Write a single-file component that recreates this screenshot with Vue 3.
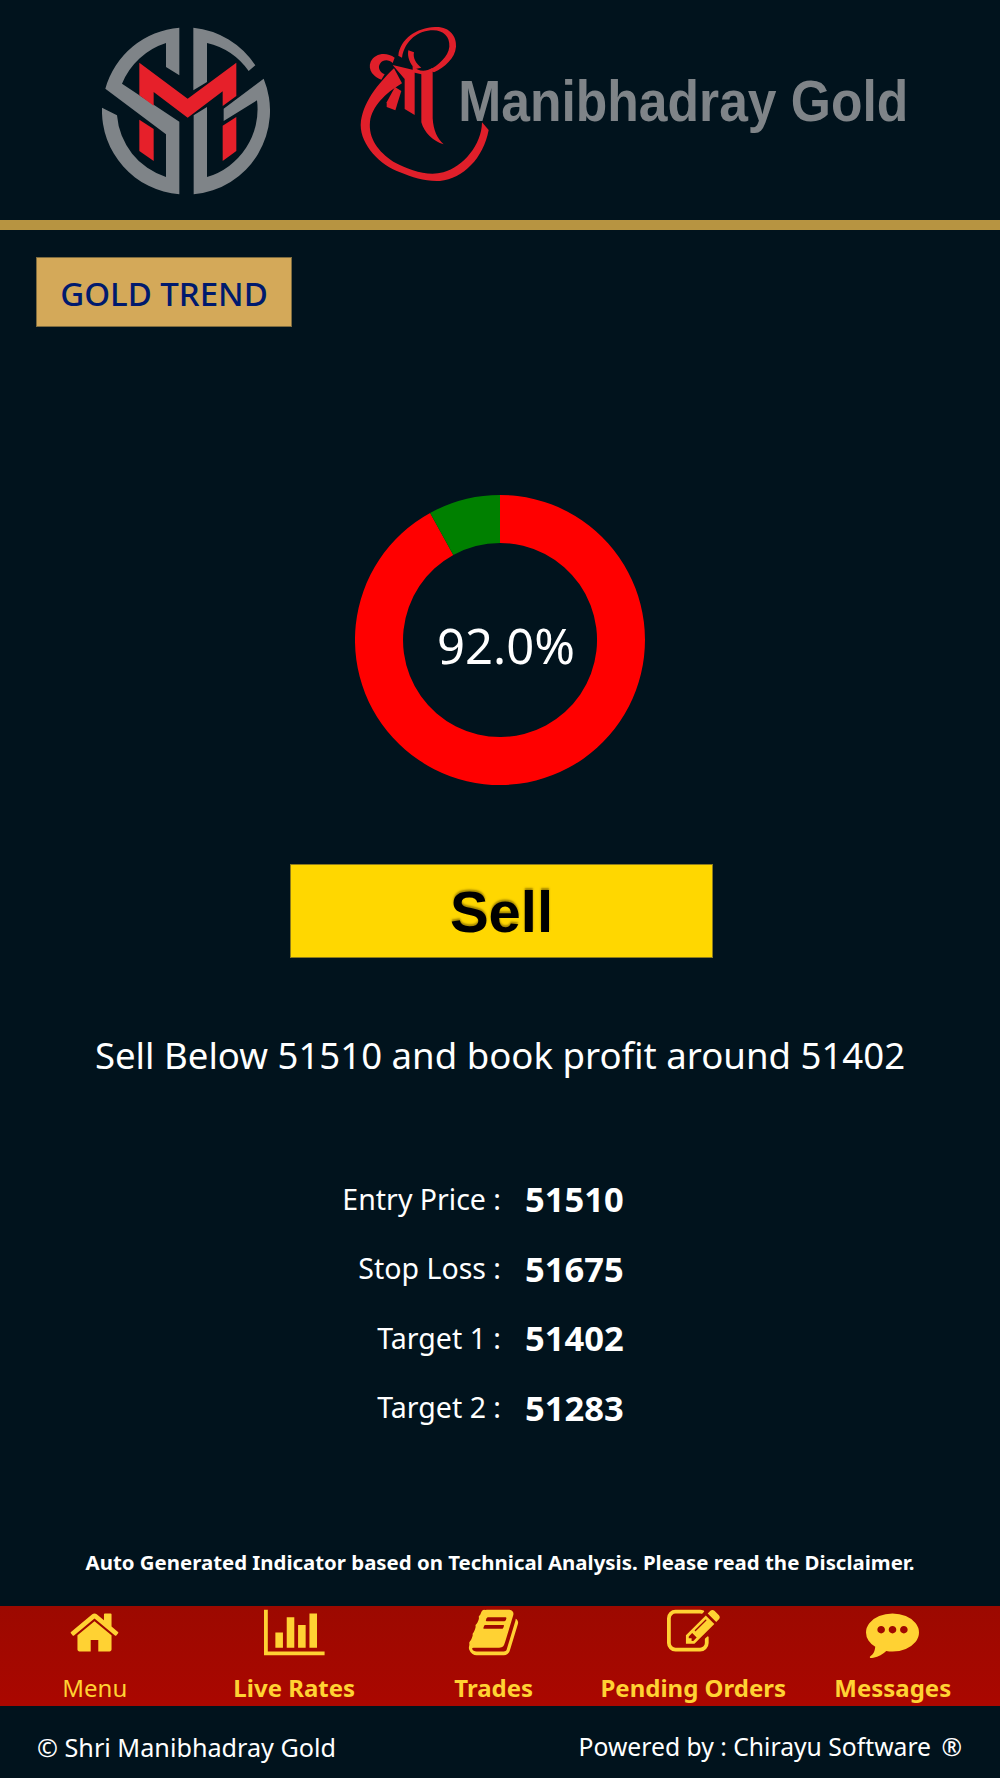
<script setup>
const rows = [
  { label: 'Entry Price :', value: '51510' },
  { label: 'Stop Loss :', value: '51675' },
  { label: 'Target 1 :', value: '51402' },
  { label: 'Target 2 :', value: '51283' },
]
const nav = [
  { label: 'Menu', plain: true, w: 53, vb: '0 0 1792 1792', d: 'M1472 992v480q0 26-19 45t-45 19h-384v-384h-256v384h-384q-26 0-45-19t-19-45v-480q0-1 .5-3t.5-3l575-474 575 474q1 2 1 6zm223-69l-62 74q-8 9-21 11h-3q-13 0-21-7l-692-577-692 577q-12 8-24 7-13-2-21-11l-62-74q-8-10-7-23.500t11-21.500l719-599q32-26 76-26t76 26l244 204v-195q0-14 9-23t23-9h192q14 0 23 9t9 23v408l219 182q10 8 11 21.500t-7 23.500z' },
  { label: 'Live Rates', w: 60.6, vb: '0 0 2048 1792', d: 'M640 896v512h-256v-512h256zm384-512v1024h-256v-1024h256zm1024 1152v128h-2048v-1536h128v1408h1920zm-640-896v768h-256v-768h256zm384-384v1152h-256v-1152h256z' },
  { label: 'Trades', w: 53, vb: '0 0 1792 1792', d: 'M1703 478q40 57 18 129l-275 906q-19 64-76.500 107.500t-122.500 43.500h-923q-77 0-148.500-53.500t-99.500-131.500q-24-67-2-127 0-4 3-27t4-37q1-8-3-21.500t-3-19.500q2-11 8-21t16.500-23.500 16.500-23.500q23-38 45-91.500t30-91.500q3-10 .5-30t-.5-28q3-11 17-28t17-23q21-36 42-92t25-90q1-9-2.500-32t.5-28q4-13 22-30.500t22-22.500q19-26 42.500-84.500t27.500-96.500q1-8-3-25.500t-2-26.500q2-8 9-18t18-23 17-21q8-12 16.500-30.500t15-35 16-36 19.500-32 26.500-23.500 36-11.500 47.500 5.500l-1 3q38-9 51-9h761q74 0 114 56t18 130l-274 906q-36 119-71.500 153.500t-128.500 34.500h-869q-27 0-38 15-11 16-1 43 24 70 144 70h923q29 0 56-15.500t35-41.500l300-987q7-22 5-57 38 15 59 43zm-1064 2q-4 13 2 22.500t20 9.500h608q13 0 25.500-9.500t16.500-22.500l21-64q4-13-2-22.500t-20-9.500h-608q-13 0-25.500 9.500t-16.500 22.500zm-83 256q-4 13 2 22.500t20 9.500h608q13 0 25.500-9.500t16.500-22.500l21-64q4-13-2-22.500t-20-9.500h-608q-13 0-25.500 9.500t-16.500 22.500z' },
  { label: 'Pending Orders', w: 53, vb: '0 0 1792 1792', d: 'M888 1184l116-116-152-152-116 116v56h96v96h56zm440-720q-16-16-33 1l-350 350q-17 17-1 33t33-1l350-350q17-17 1-33zm80 594v190q0 119-84.500 203.500t-203.500 84.500h-832q-119 0-203.500-84.500t-84.500-203.500v-832q0-119 84.500-203.500t203.500-84.500h832q63 0 117 25 15 7 18 23 3 17-9 29l-49 49q-14 14-32 8-23-6-45-6h-832q-66 0-113 47t-47 113v832q0 66 47 113t113 47h832q66 0 113-47t47-113v-126q0-13 9-22l64-64q15-15 35-7t20 29zm-96-738l288 288-672 672h-288v-288zm444 132l-92 92-288-288 92-92q28-28 68-28t68 28l152 152q28 28 28 68t-28 68z' },
  { label: 'Messages', w: 53, vb: '0 0 1792 1792', d: 'M640 800q0-53-37.500-90.500t-90.500-37.500-90.500 37.500-37.500 90.500 37.500 90.500 90.500 37.500 90.500-37.500 37.500-90.500zm384 0q0-53-37.500-90.500t-90.500-37.500-90.500 37.500-37.500 90.500 37.500 90.500 90.500 37.500 90.500-37.500 37.500-90.500zm384 0q0-53-37.500-90.500t-90.500-37.500-90.500 37.500-37.500 90.500 37.500 90.500 90.500 37.500 90.500-37.500 37.500-90.500zm384 96q0 174-120 321.500t-326 233-450 85.500q-110 0-211-18-173 173-435 229-52 10-86 13-12 1-22-6t-13-18q-4-15 20-37 5-5 23.500-21.500t25.500-23.500 23.500-25.500 24-31.500 20.500-37 20-48 14.500-57.500 12.500-72.500q-146-90-229.500-216.500t-83.500-269.500q0-174 120-321.500t326-233 450-85.500 450 85.500 326 233 120 321.500z' },
]
</script>

<template>
  <div class="page">
    <header class="header">
      <svg class="logo-sm" viewBox="125 80 504 504" aria-label="SM logo">
        <g fill="#7f8488">
          <path d="M357 82A252 252 0 0 0 135 265L317 402V530A212 212 0 0 1 170 345L125 322A252 252 0 0 0 357 582V364L185 250A212 212 0 0 1 317 128V200L357 225Z" />
          <path d="M399 82A252 252 0 0 1 585 195L565 212A212 212 0 0 0 440 128V245L399 270Z" />
          <path d="M400 345L440 320V530A212 212 0 0 0 590 300L490 362V325L610 235A252 252 0 0 1 400 582Z" />
        </g>
        <g fill="#e6202a">
          <path d="M237 187L382 295L528 187V287L487 317V273L382 352L280 275V316L237 285Z" />
          <path d="M237 358L280 386V482L237 452Z" />
          <path d="M487 376L528 350V452L487 482Z" />
        </g>
      </svg>
      <svg class="logo-gold" viewBox="0 0 1680 525" aria-label="Shri Manibhadray Gold">
        <g fill="#e01f2a">
          <path d="M145 122C150 72 200 38 255 36C300 34 320 65 318 95C315 130 285 155 252 172L236 166C265 150 295 125 298 95C300 65 280 46 250 46C205 46 165 75 156 128Z" />
          <path d="M134 128C110 110 75 114 62 140C52 165 72 186 94 194L104 178C90 172 82 158 90 146C100 132 117 134 128 144Z" />
          <path d="M132 160C85 205 35 265 32 330C32 390 90 450 150 472C190 488 225 500 270 498C340 490 400 430 416 345L396 322C395 390 340 455 280 472C230 485 180 465 130 440C85 410 55 370 60 320C66 275 105 235 156 205Z" />
          <path d="M128 150L194 166V300L164 282V192Z" />
          <path d="M188 152C205 170 225 172 248 158V310C250 345 262 372 281 388C250 380 222 352 214 322V178L188 172Z" />
          <path d="M110 262L135 216L154 228L136 286L110 276Z" />
          <path d="M175 106L192 112C188 128 198 146 214 158L196 162C180 148 171 126 175 106Z" />
        </g>
        <text class="logo-text" transform="translate(325 318) scale(0.9 1)" textLength="1500" lengthAdjust="spacingAndGlyphs">Manibhadray Gold</text>
      </svg>
    </header>

    <div class="tag">GOLD TREND</div>

    <div class="donut">
      <svg viewBox="0 0 290 290" class="donut-svg">
        <path fill="#ff0000" fill-rule="evenodd" d="M145 0A145 145 0 1 1 75.100 17.950L98.300 60A97 97 0 1 0 145 48Z" />
        <path fill="#008000" d="M145 0V48A97 97 0 0 0 98.300 60L75.100 17.950A145 145 0 0 1 145 0Z" />
      </svg>
      <div class="donut-label">92.0%</div>
    </div>

    <div class="signal">Sell</div>
    <p class="advice">Sell Below 51510 and book profit around 51402</p>

    <div class="levels">
      <div v-for="r in rows" :key="r.label" class="level">
        <span class="level-label">{{ r.label }}</span>
        <span class="level-value">{{ r.value }}</span>
      </div>
    </div>

    <p class="disclaimer">Auto Generated Indicator based on Technical Analysis. Please read the Disclaimer.</p>

    <nav class="nav">
      <div class="nav-inner">
        <a v-for="n in nav" :key="n.label" class="nav-item" :class="{ plain: n.plain }">
          <svg class="nav-icon" :viewBox="n.vb" :style="{ width: n.w + 'px' }"><path :d="n.d" /></svg>
          <span class="nav-label">{{ n.label }}</span>
        </a>
      </div>
    </nav>

    <footer class="footer">
      <span>© Shri Manibhadray Gold</span>
      <span class="powered">Powered by : Chirayu Software <span class="reg">®</span></span>
    </footer>
  </div>
</template>

<style scoped>
.page {
  width: 1000px;
  height: 1778px;
  overflow: hidden;
  background: #01131d;
  color: #fff;
  font-family: "Noto Sans", "Open Sans", sans-serif;
}
.header {
  height: 220px;
  box-sizing: content-box;
  border-bottom: 10px solid #b79441;
  display: flex;
  align-items: flex-start;
}
.logo-sm {
  width: 168px;
  height: 168px;
  margin: 27px 0 0 102px;
  flex: none;
}
.logo-gold {
  width: 560px;
  height: 175px;
  margin: 15px 0 0 80px;
  flex: none;
}
.logo-text {
  font-family: "Liberation Sans", sans-serif;
  font-weight: 700;
  font-size: 172px;
  fill: #7f8488;
}
.tag {
  width: 256px;
  height: 70px;
  margin: 27px 0 0 36px;
  padding-top: 2px;
  box-sizing: border-box;
  border: 1px solid #7d6b3f;
  background: #d4a959;
  color: #001a6e;
  font-size: 33px;
  font-weight: 500;
  display: flex;
  align-items: center;
  justify-content: center;
}
.donut {
  position: relative;
  width: 290px;
  height: 290px;
  margin: 168px auto 0;
}
.donut-svg {
  width: 290px;
  height: 290px;
  display: block;
}
.donut-label {
  position: absolute;
  inset: 0;
  display: flex;
  align-items: center;
  justify-content: center;
  padding: 10px 0 0 12px;
  font-size: 49px;
}
.signal {
  width: 423px;
  height: 94px;
  margin: 79px 0 0 290px;
  box-sizing: border-box;
  border: 1px solid #8d7b1c;
  background: #ffd700;
  color: #000;
  font-family: "Liberation Sans", sans-serif;
  font-weight: 700;
  font-size: 58px;
  text-shadow: 0 -2px 2px rgba(90, 70, 0, 0.55);
  display: flex;
  align-items: center;
  justify-content: center;
}
.advice {
  margin: 72px 0 0;
  height: 50px;
  line-height: 50px;
  font-size: 36.600px;
  text-align: center;
}
.levels {
  margin-top: 84px;
}
.level {
  display: grid;
  grid-template-columns: 501px 1fr;
  column-gap: 24px;
  height: 69.500px;
  align-items: center;
}
.level-label {
  text-align: right;
  font-size: 28.500px;
}
.level-value {
  font-size: 34.500px;
  font-weight: 700;
}
.disclaimer {
  margin: 105px 0 0;
  height: 30px;
  line-height: 30px;
  font-size: 20.400px;
  font-weight: 700;
  text-align: center;
}
.nav {
  margin-top: 29px;
  height: 100px;
  background: linear-gradient(180deg, #9c0900, #aa0700);
}
.nav-inner {
  display: grid;
  grid-template-columns: repeat(5, 199.500px);
  margin-left: -5px;
}
.nav-item {
  height: 100px;
  display: flex;
  flex-direction: column;
  align-items: center;
  color: #ffd233;
  font-size: 24px;
  font-weight: 700;
}
.nav-item.plain {
  font-weight: 400;
}
.nav-icon {
  height: 53px;
  display: block;
  fill: #ffd233;
  flex: none;
}
.nav-label {
  margin-top: 11px;
  line-height: 36px;
  white-space: nowrap;
}
.footer {
  height: 72px;
  box-sizing: border-box;
  padding: 9px 38px 0 37px;
  display: flex;
  align-items: center;
  justify-content: space-between;
  font-size: 25.200px;
}
.powered {
  font-size: 24.700px;
}
.reg {
  margin-left: 4px;
}
</style>

<style>
html, body {
  margin: 0;
  background: #01131d;
}
</style>
